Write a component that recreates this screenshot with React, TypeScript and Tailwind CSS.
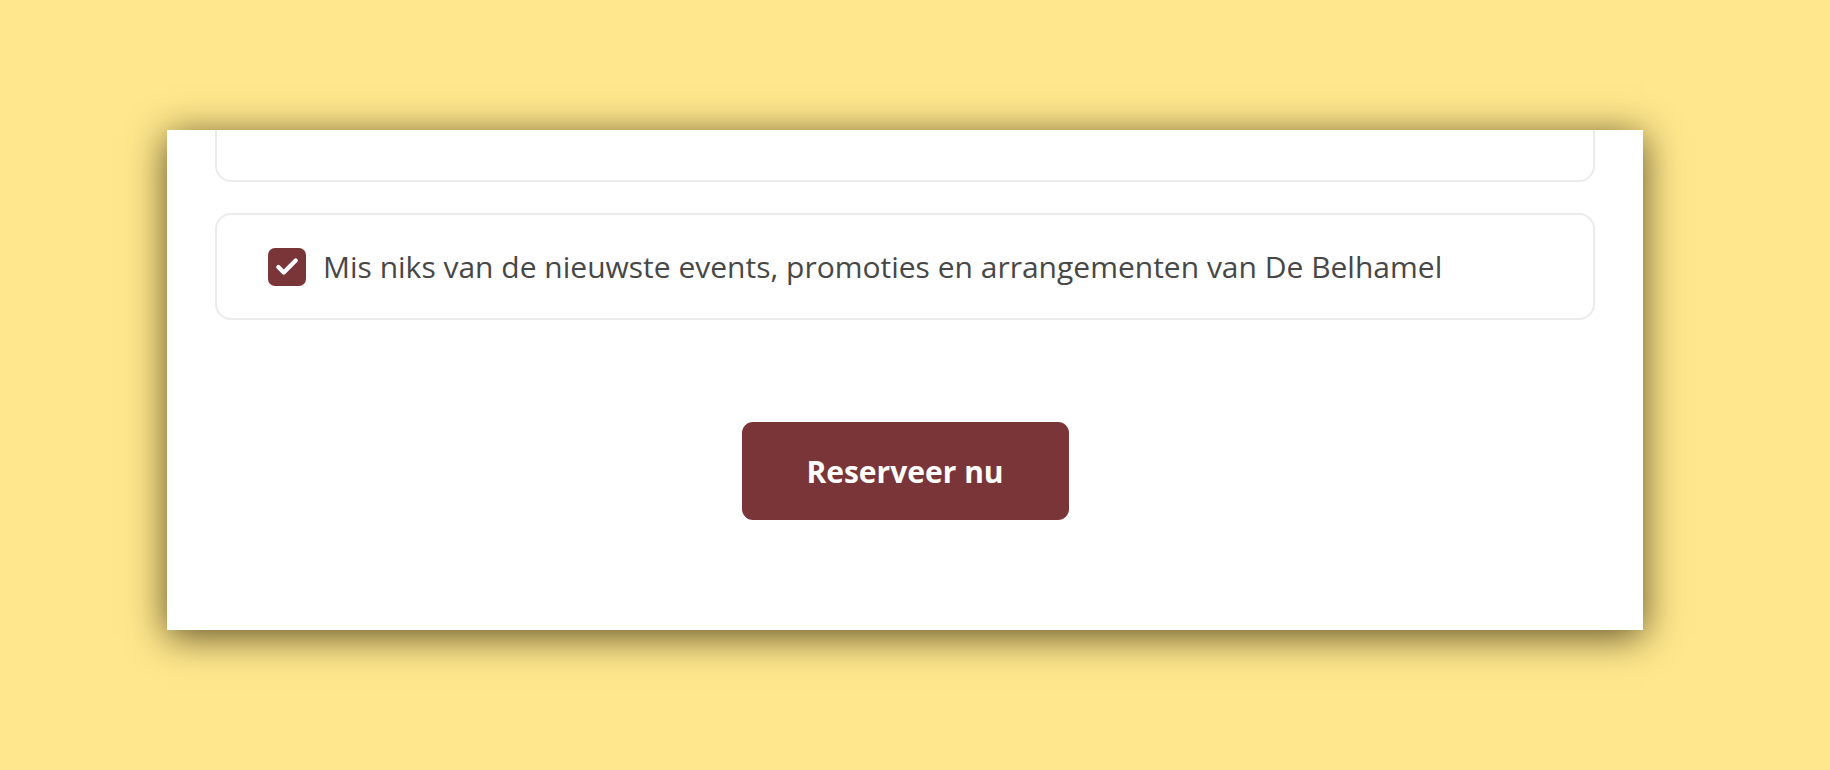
import { Check } from "lucide-react";

export default function App() {
  return (
    <div className="h-[770px] w-full bg-[#fee78c] pt-[130px] pl-[167px] font-['Open_Sans',sans-serif]">
      <div className="w-[1476px] h-[500px] bg-white overflow-hidden px-[48px] shadow-[0_6px_36px_rgba(30,20,0,0.72)]">
        {/* previous field, scrolled mostly out of view */}
        <div className="-mt-[48px] h-[100px] rounded-[16px] border-2 border-[#ebebeb]" />

        <label className="mt-[31px] h-[107px] rounded-[16px] border-2 border-[#ebebeb] flex items-center pl-[51px] gap-[17px]">
          <span className="w-[38px] h-[38px] rounded-[7px] bg-[#7a3538] flex items-center justify-center shrink-0">
            <Check className="w-[26px] h-[26px] text-white" strokeWidth={4} />
          </span>
          <span className="text-[30px] text-[#474747] leading-none">
            Mis niks van de nieuwste events, promoties en arrangementen van De Belhamel
          </span>
        </label>

        <div className="flex justify-center mt-[102px]">
          <button className="w-[327px] h-[98px] rounded-[11px] bg-[#7a3538] text-white text-[30px] font-bold">
            Reserveer nu
          </button>
        </div>
      </div>
    </div>
  );
}
